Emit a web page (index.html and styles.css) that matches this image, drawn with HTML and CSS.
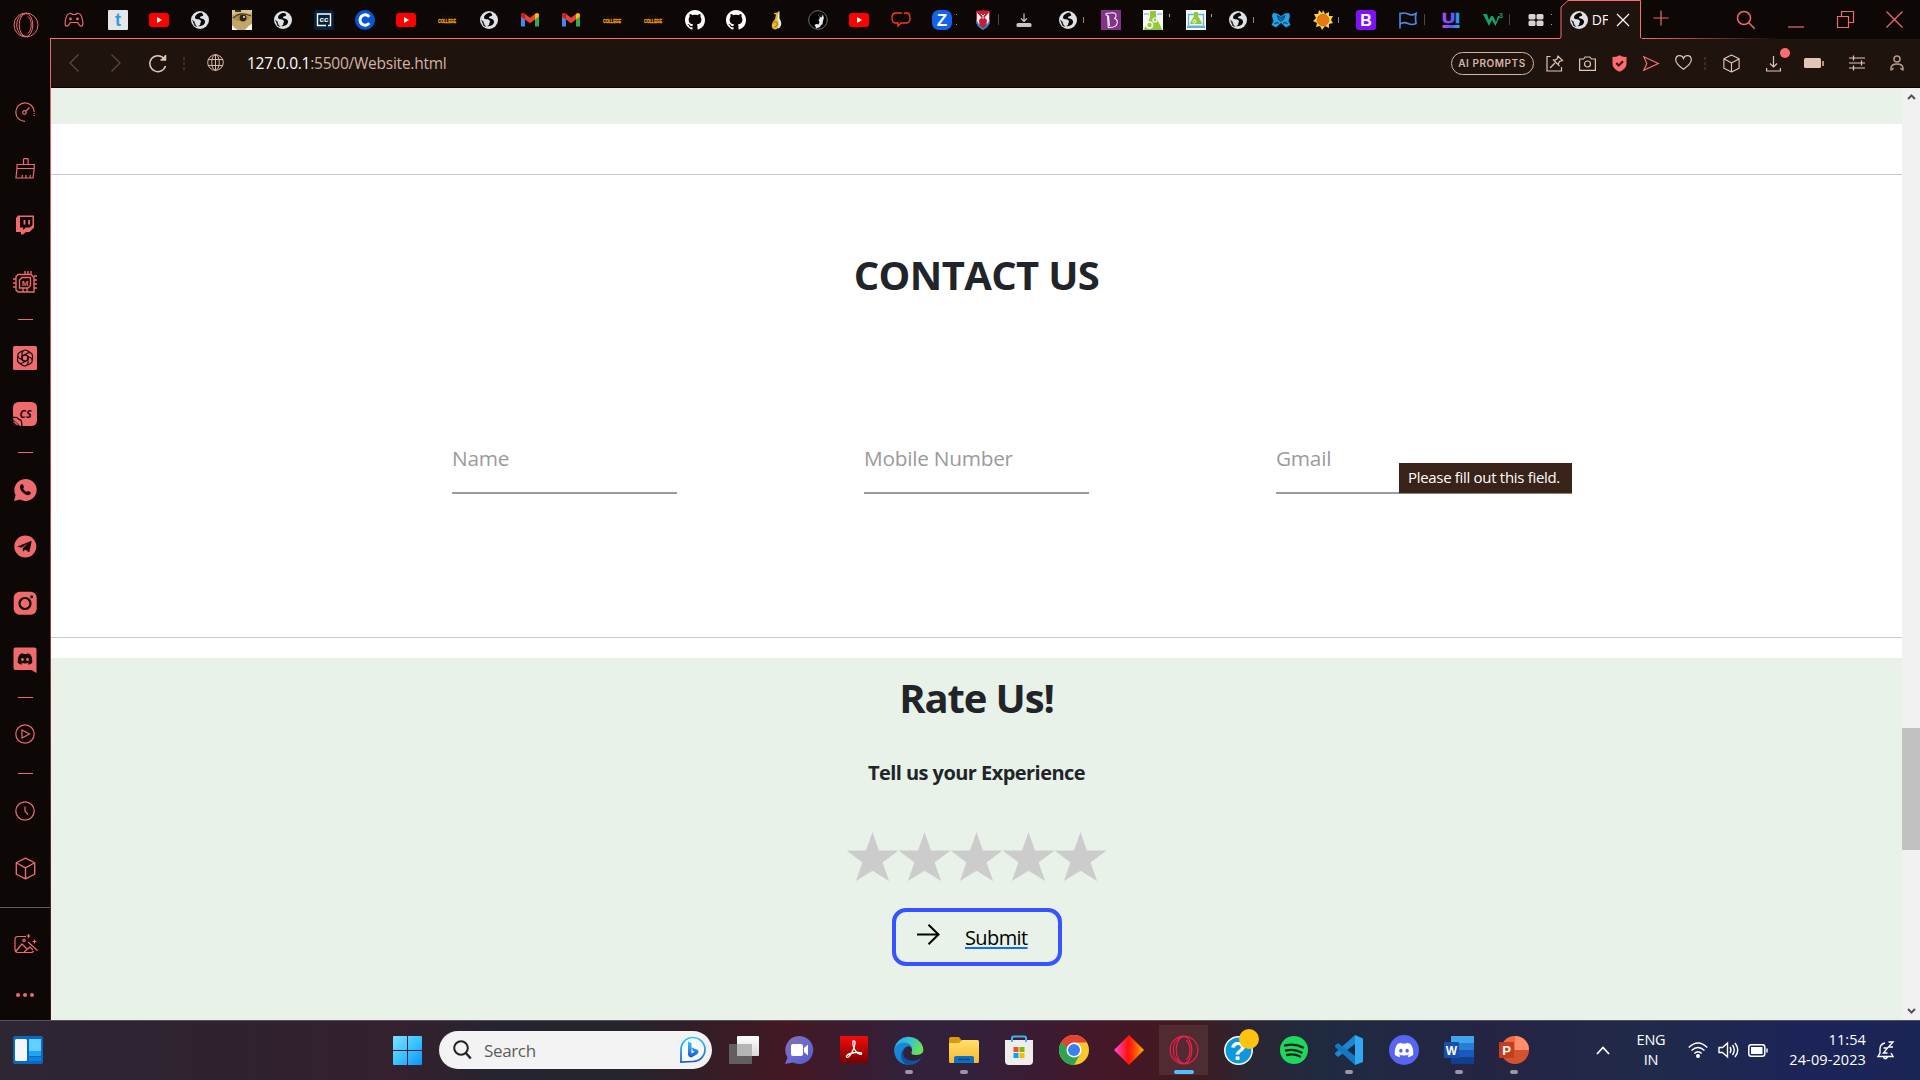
FILE: index.html
```html
<!DOCTYPE html>
<html lang="en">
<head>
<meta charset="utf-8">
<title>DRAFT</title>
<link rel="stylesheet" href="styles.css">
</head>
<body>
<svg class="defs" width="0" height="0">
  <defs>
    <linearGradient id="gUi" x1="0" x2="1"><stop offset="0" stop-color="#b050e8"/><stop offset=".5" stop-color="#6a4cff"/><stop offset="1" stop-color="#10b8f0"/></linearGradient>
    <linearGradient id="gWin" x1="0" y1="0" x2="1" y2="1"><stop offset="0" stop-color="#7fe0ff"/><stop offset=".5" stop-color="#3cc4ff"/><stop offset="1" stop-color="#0a93fa"/></linearGradient>
    <linearGradient id="gBing" x1="0" y1="0" x2="0" y2="1"><stop offset="0" stop-color="#35c8f4"/><stop offset="1" stop-color="#2056d0"/></linearGradient>
    <linearGradient id="gChat" x1="0" y1="0" x2="1" y2="1"><stop offset="0" stop-color="#8c6aa8"/><stop offset=".5" stop-color="#6a6cd0"/><stop offset="1" stop-color="#5058c8"/></linearGradient>
    <linearGradient id="gPdf" x1="0" y1="0" x2="0" y2="1"><stop offset="0" stop-color="#f50c0c"/><stop offset="1" stop-color="#7a0000"/></linearGradient>
    <linearGradient id="gEdge" x1="0" y1="0" x2="1" y2=".4"><stop offset="0" stop-color="#28a8e0"/><stop offset=".5" stop-color="#35c0d8"/><stop offset="1" stop-color="#66e258"/></linearGradient>
    <linearGradient id="gEdge2" x1="0" y1="0" x2="1" y2="1"><stop offset="0" stop-color="#1a90dc"/><stop offset="1" stop-color="#1676c8"/></linearGradient>
    <linearGradient id="gFolder" x1="0" y1="0" x2="0" y2="1"><stop offset="0" stop-color="#ffdf6a"/><stop offset="1" stop-color="#f8b830"/></linearGradient>
    <linearGradient id="gDia" x1="0" x2="1"><stop offset="0" stop-color="#ff4fd8"/><stop offset=".45" stop-color="#ff1212"/><stop offset=".6" stop-color="#ff2c08"/><stop offset="1" stop-color="#ffb300"/></linearGradient>
    <linearGradient id="gTask" x1="0" y1="0" x2="0" y2="1"><stop offset="0" stop-color="#fff"/><stop offset="1" stop-color="#d8d8d8"/></linearGradient>
    <symbol id="world" viewBox="0 0 20 20"><circle cx="10" cy="10" r="9" fill="#dfe3e8"/><path d="M11.500 2.500c-3 .3-5.800 2-6.500 4.500-.3 1.500 1 2.300 2.500 2.200 1.500 0 3 .5 3.400 1.800.3 1-.6 1.600-.6 2.800 0 1.300-.8 2-2.300 2.100 3.500 1 5.600-.8 6.600-2.300 1-1.600.4-3.400-1-4.300-1.300-.8-3.300-.5-3.600-1.500-.3-1 1.200-1.500 2.800-2 1-.5.5-1.500-1.300-3.300z" fill="#0c0807"/><path d="M2 9.500l2.500 2 1 3 2 2.500-3-1z" fill="#2a2c30"/></symbol>
    <symbol id="yt" viewBox="0 0 20 20"><rect y="3" width="20" height="14" rx="3" fill="#f00"/><path d="M8 7v6l5-3z" fill="#fff"/></symbol>
    <symbol id="college" viewBox="0 0 20 20"><text x="10" y="13" text-anchor="middle" font-family="Liberation Sans" font-weight="700" font-size="5.500" textLength="18" lengthAdjust="spacingAndGlyphs" fill="#ffad10" stroke="#f5a30c" stroke-width=".3">COLLEGE</text><path d="M5 6.500h10" stroke="#1c1310" stroke-width="2" stroke-dasharray="2 1"/></symbol>
    <symbol id="gmail" viewBox="0 0 20 20"><path d="M1 16.500V5l4 3v8.500z" fill="#4285f4"/><path d="M15 16.500V8l4-3v11.500z" fill="#34a853"/><path d="M1 7V5c0-2 2-2.600 3.500-1.500L10 7.700l5.500-4.200L15 9.500l-5 3.800-5-3.800z" fill="#ea4335"/><path d="M15 9.500V4l.5-.5C17 2.400 19 3 19 5v1.500z" fill="#fbbc04"/><path d="M1 6.500V5c0-2 2-2.600 3.500-1.500L5 4v5.500z" fill="#c5221f"/></symbol>
    <symbol id="github" viewBox="0 0 16 16"><path fill="#fff" d="M8 0C3.580 0 0 3.580 0 8c0 3.540 2.290 6.530 5.470 7.590.4.070.55-.17.55-.38 0-.19-.01-.82-.01-1.490-2.010.37-2.530-.49-2.690-.94-.09-.23-.48-.94-.82-1.130-.28-.15-.68-.52-.01-.53.63-.01 1.080.58 1.230.82.72 1.210 1.870.87 2.330.66.070-.52.28-.87.51-1.070-1.780-.2-3.640-.89-3.640-3.950 0-.87.31-1.590.82-2.150-.08-.2-.36-1.020.08-2.120 0 0 .67-.21 2.200.82.64-.18 1.320-.27 2-.27s1.360.09 2 .27c1.530-1.040 2.200-.82 2.200-.82.44 1.100.16 1.920.08 2.120.51.56.82 1.270.82 2.150 0 3.070-1.870 3.750-3.650 3.950.29.25.54.73.54 1.480 0 1.070-.01 1.930-.01 2.200 0 .21.15.46.55.38A8.010 8.010 0 0 0 16 8c0-4.420-3.580-8-8-8z"/></symbol>
    <symbol id="opera" viewBox="0 0 26 26"><g fill="none" stroke="currentColor"><circle cx="13" cy="13" r="12"/><ellipse cx="13" cy="13" rx="6.800" ry="11.500"/><path d="M15 4.500c2.500 2 3.200 5 3.200 8.500s-1 6.500-3.200 8.500M12 24.700c-5-1.500-8.300-6-8.300-11.700S7 2.800 12 1.300"/></g></symbol>
    <symbol id="cube" viewBox="0 0 20 20"><path d="M10 1l8 4v10l-8 4-8-4V5zM2 5l8 4.500L18 5M10 9.500V19" fill="none" stroke="currentColor" stroke-width="1.200" stroke-linejoin="round"/></symbol>
    <symbol id="discord" viewBox="0 0 24 24"><path fill="currentColor" d="M20.317 4.370a19.790 19.790 0 0 0-4.885-1.515.074.074 0 0 0-.079.037c-.211.375-.445.865-.608 1.250-1.845-.276-3.680-.276-5.487 0-.164-.393-.406-.874-.618-1.250a.077.077 0 0 0-.079-.037 19.736 19.736 0 0 0-4.885 1.515.07.07 0 0 0-.032.028C.533 9.046-.319 13.580.099 18.058a.082.082 0 0 0 .031.056c2.053 1.508 4.041 2.423 5.993 3.029a.078.078 0 0 0 .084-.028c.462-.63.873-1.295 1.226-1.994a.076.076 0 0 0-.042-.106c-.653-.248-1.274-.55-1.872-.892a.077.077 0 0 1-.008-.128c.126-.094.252-.192.372-.291a.074.074 0 0 1 .078-.011c3.928 1.793 8.180 1.793 12.061 0a.074.074 0 0 1 .079.010c.120.099.246.198.373.292a.077.077 0 0 1-.007.128 12.299 12.299 0 0 1-1.873.891.077.077 0 0 0-.041.107c.360.698.772 1.363 1.225 1.993a.076.076 0 0 0 .084.029c1.961-.607 3.950-1.522 6.002-3.029a.077.077 0 0 0 .031-.055c.5-5.177-.838-9.674-3.549-13.660a.061.061 0 0 0-.031-.029zM8.020 15.331c-1.183 0-2.157-1.086-2.157-2.419 0-1.333.956-2.419 2.157-2.419 1.211 0 2.176 1.095 2.157 2.419 0 1.333-.956 2.419-2.157 2.419zm7.975 0c-1.183 0-2.157-1.086-2.157-2.419 0-1.333.955-2.419 2.157-2.419 1.211 0 2.176 1.095 2.157 2.419 0 1.333-.946 2.419-2.157 2.419z"/></symbol>
  </defs>
</svg>

<div class="screen">
  <div class="browser">
    <aside class="sidebar">
      <div class="brand"><svg width="26" height="26" class="i"><use href="#opera"/></svg></div>
      <div class="item"><svg width="20" height="20" viewBox="0 0 20 20" class="line"><path d="M10 19.300A9.200 9.200 0 1 1 19.200 10"/><path d="M19.200 11v3" stroke-dasharray="1 1"/><circle cx="9.500" cy="10.500" r="1.800"/><path d="M11 9l3.500-3.500"/></svg></div>
      <div class="item"><svg width="20" height="21" viewBox="0 0 20 21" class="line"><path d="M2 6.500h17.300V10L18 20H1L2 10zM8.500 6V1.500q0-.8.8-.8h3q.8 0 .8.800V6M2 10.500h17M7 20l.5-3M11 20v-3M15 20l.5-3"/></svg></div>
      <div class="item"><svg width="20" height="20" viewBox="0 0 20 20"><path fill="#ee6a6c" fill-rule="evenodd" d="M3 .5h16v12L14.500 17H11L8 19.500H6V17H1V3zM5 2v10.500h3.200v2.500l2.500-2.500H15l2.500-2.500V2z"/><path d="M9.500 5v4.500M14 5v4.500" stroke="#ee6a6c" stroke-width="1.800"/></svg></div>
      <div class="item low"><svg width="24" height="24" viewBox="0 0 24 24" class="line"><path d="M5 3.500h13l3 3V21H5l-2-2V5.500zM9 6.500h8.500v8L15 17H6.500V9zM12 0v3.500M15 0v3.500M18 0v3.500M10 21v-4M14 21v-4M0 8h3M0 12h3M0 16h3M21 5h3M21 9h3M21 13h3M21 17h3" stroke-width="1.400"/><text x="12" y="15" text-anchor="middle" class="chipletter">M</text></svg></div>
      <div class="dash"></div>
      <div class="item"><svg width="24" height="24" viewBox="0 0 24 24"><rect width="24" height="24" rx="1.500" fill="#ee6a6c"/><g fill="none" stroke="#140a08" stroke-width="1.200"><path id="petal" d="M9 8.500V7.200a3.300 3.300 0 0 1 5-2.700l3 1.800M9 8.500v5.200l3 1.700"/><use href="#petal" transform="rotate(60 12 12)"/><use href="#petal" transform="rotate(120 12 12)"/><use href="#petal" transform="rotate(180 12 12)"/><use href="#petal" transform="rotate(240 12 12)"/><use href="#petal" transform="rotate(300 12 12)"/></g></svg></div>
      <div class="item"><svg width="24" height="24" viewBox="0 0 24 24"><rect width="24" height="24" rx="5.500" fill="#ee6a6c"/><text x="12.500" y="15.700" text-anchor="middle" class="cs">CS</text><path d="M0 15.500q4-.5 4.500.5 1 1.500 3 2 1.500.8 1.300 6" fill="none" stroke="#140a08" stroke-width="1.300"/><path d="M0 17l7 7q-7 1-7-7z" fill="#140a08"/><path d="M1 18.500q0 4 4.500 4.800z" fill="#ee6a6c"/></svg></div>
      <div class="dash"></div>
      <div class="item"><svg width="24" height="24" viewBox="0 0 24 24"><path d="M12.200 1a11 11 0 1 1-5 20.500L1 23l1.600-5.800A11 11 0 0 1 12.200 1z" fill="#ee6a6c"/><path d="M8.200 6.500c.8-.8 1.500-.4 1.800.3l.9 2c.2.500-.2 1.100-.8 1.800.8 1.600 2 2.700 3.600 3.400.7-.8 1-1.300 1.600-1l2.200 1.100c.7.400.2 2.500-1.600 3-3 1-9-4-9-7.800 0-1.400.7-2.200 1.300-2.800z" fill="#140a08"/></svg></div>
      <div class="item"><svg width="24" height="24" viewBox="0 0 24 24"><circle cx="12.300" cy="12.500" r="11" fill="#ee6a6c"/><path d="M4.500 12.500L18 7q.8-.2.600.7L16.500 17.500q-.2.800-1 .4l-3.300-2.400-1.700 1.700q-.6.300-.7-.5l.1-2.700L15 9.500l-6.700 4.300-3.600-1q-.6-.1-.2-.3z" fill="#140a08"/></svg></div>
      <div class="item"><svg width="24" height="24" viewBox="0 0 24 24"><rect x=".7" y=".7" width="23" height="23" rx="6" fill="#ee6a6c"/><circle cx="12" cy="12.500" r="5.500" fill="none" stroke="#140a08" stroke-width="2.200"/><circle cx="18.700" cy="5.700" r="1.500" fill="#140a08"/></svg></div>
      <div class="item"><svg width="24" height="26" viewBox="0 0 24 26" color="#140a08"><path d="M2.500.5h19Q23.500.5 23.500 2.500V26l-5-3h-16Q.5 23 .5 21V2.500q0-2 2-2z" fill="#ee6a6c"/><use href="#discord" x="4.500" y="4.500" width="15" height="15"/></svg></div>
      <div class="dash"></div>
      <div class="item high"><svg width="20" height="20" viewBox="0 0 20 20" class="line"><circle cx="10" cy="10" r="9.200"/><path d="M7 6v8l7.500-4z"/></svg></div>
      <div class="dash"></div>
      <div class="item"><svg width="20" height="20" viewBox="0 0 20 20" class="line"><circle cx="10" cy="10" r="9.200"/><path d="M10 5.500V10l3 3.500"/></svg></div>
      <div class="item low"><svg width="23" height="23" class="i"><use href="#cube"/></svg></div>
      <div class="sidefoot">
        <svg width="24" height="20" viewBox="0 0 24 20" class="line"><path d="M12 2.500H4Q1 2.500 1 5.500v10Q1 18.500 4 18.500h13Q19 18.500 19.500 17M2 17l6-7 5 5M10 18l6-5 3 3M14 8l9.500 8.500M14.500 0v4M12.500 2h4M20.500 5.500v4M18.500 7.500h4"/><circle cx="10" cy="6.500" r="1.200"/></svg>
        <div class="dots"><i></i><i></i><i></i></div>
      </div>
    </aside>

    <div class="main">
      <header class="tabs">
        <div class="gx"><svg width="20" height="16" viewBox="0 0 20 16" class="line"><path d="M5.500 1.500q1.500-.7 3 1h3q1.500-1.700 3-1Q17.500 2 18.500 8q1 5-.5 6-2 1-4.500-3.500h-7Q4 15 2 14 .5 13 1.500 8 2.500 2 5.500 1.500z"/><circle cx="6.500" cy="7" r=".8"/><circle cx="13.500" cy="7" r=".8"/></svg></div>
        <div class="group g1">
          <div><svg viewBox="0 0 20 20"><rect width="20" height="20" rx="1" fill="#e4e6e8"/><text x="10" y="15.500" text-anchor="middle" font-size="18" fill="#309ce0" class="b">t</text></svg></div>
          <div><svg><use href="#yt"/></svg></div>
          <div><svg><use href="#world"/></svg></div>
          <div><svg viewBox="0 0 20 20"><rect width="20" height="20" fill="#c0a868"/><path d="M0 0h20v3L14 5Q8 0 0 5z" fill="#d8c690"/><path d="M3 0h6v2H3z" fill="#403014"/><path d="M13 20q4-5 7-6v6zM0 15q2 3 6 5H0z" fill="#fbf8f0"/><path d="M1 9q8-8 17-1-7 6-17 1z" fill="#a88c50"/><circle cx="11" cy="8" r="3.400" fill="#2e2414"/><circle cx="12" cy="7" r=".9" fill="#fff"/><path d="M1 8q8-7 18-2" stroke="#4c3a1c" fill="none" stroke-width="1.200"/></svg></div>
          <div><svg><use href="#world"/></svg></div>
          <div><svg viewBox="0 0 20 20"><rect width="20" height="20" rx="2.500" fill="#06213d"/><path d="M12 15.500H3.500V4h13v11.500h-2.500" fill="none" stroke="#fff" stroke-width="1.400"/><text x="10" y="12" text-anchor="middle" font-size="8" fill="#fff" class="b">cc</text></svg></div>
          <div><svg viewBox="0 0 20 20"><circle cx="10" cy="10" r="10" fill="#0756d9"/><path d="M14.300 6.800a5.200 5.200 0 1 0 0 6.400" fill="none" stroke="#fff" stroke-width="3"/></svg></div>
          <div><svg><use href="#yt"/></svg></div>
          <div><svg><use href="#college"/></svg></div>
          <div><svg><use href="#world"/></svg></div>
          <div><svg><use href="#gmail"/></svg></div>
          <div><svg><use href="#gmail"/></svg></div>
          <div><svg><use href="#college"/></svg></div>
          <div><svg><use href="#college"/></svg></div>
          <div><svg><use href="#github"/></svg></div>
          <div><svg><use href="#github"/></svg></div>
          <div><svg viewBox="0 0 20 20"><path d="M7 3l5-.7-1 7q2 3 1 7-2 4-5 3-3-1.500-2-5 .8-3 3-5l1-5H7z" fill="#f0b828"/><path d="M11.500 1l1 .5v7q2.500 4 1.500 7-1.500 3.500-3.500 3 2.500-4 0-9z" fill="#e8e8e8"/><path d="M6.500 13q3-3 4 1-1 3-3 3" stroke="#3a7020" stroke-width=".8" fill="none"/></svg></div>
          <div><svg viewBox="0 0 20 20"><circle cx="10" cy="10" r="9.300" fill="#000" stroke="#70706e"/><path d="M10 4.500q3-2 5 0 1.500 3 0 6.500l-.5 3q-2 1-2.500 3L8 18.500q0-2-1.500-3.500 2-1.500 4-.5l1-2.500-1-2 1.500-2z" fill="#e8ecec"/><path d="M9 3.500q4-2 6 1l-1.500 3-2.500-1z" fill="#14181a"/></svg></div>
          <div><svg><use href="#yt"/></svg></div>
          <div><svg viewBox="0 0 20 20"><path d="M11 3H4.500Q1 3 1 8t3.500 5H7v3l3-3h5.500Q19 13 19 8t-3.500-5H13" fill="none" stroke="#fa3c10" stroke-width="1.400"/></svg></div>
          <div class="mark dot"><svg viewBox="0 0 20 20"><rect width="20" height="20" rx="7" fill="#1264f0"/><text x="10" y="16" text-anchor="middle" font-size="17" fill="#fff" class="b">Z</text></svg></div>
          <div class="mark"><svg viewBox="0 0 20 20"><path d="M3 1q7-1.500 14 0v9q0 6-7 10-7-4-7-10z" fill="#c51f36"/><path d="M4 2.500l4.500 5L4 12zM16 2.500l-4.500 5L16 12z" fill="#f0f0f4"/><path d="M8 4l2 2 2-2M10 6v3" stroke="#f0f0f4" fill="none"/><path d="M3.500 10q1 3 3 5l-.5-5zM16.500 10q-1 3-3 5l.5-5z" fill="#f0f0f4"/><path d="M3.500 11.500q1 4.500 6.500 7.500 5.500-3 6.500-7.500" fill="none" stroke="#1590d0" stroke-width="1.500"/></svg></div>
          <div><svg viewBox="0 0 20 20"><rect x="2.500" y="13" width="15" height="4" rx="1.500" fill="#c8c8c8"/><path d="M10 3.500V11M7 8.500l3 3 3-3" stroke="#c8c8c8" stroke-width="1.200" fill="none"/></svg></div>
        </div>
        <div class="group g2">
          <div class="mark small"><svg><use href="#world"/></svg></div>
          <div><svg viewBox="0 0 20 20"><rect width="20" height="20" fill="#813389"/><path d="M5 3.500l6.500-.8q4 0 3.500 3.500-.2 1.500-1.500 2.300 3 .8 2.800 3.800-.3 4-4 4.700l-5 .8L6.500 5.500 5 5zM7.500 5.500l1 10.500" fill="none" stroke="#eee" stroke-width="1.100" stroke-linejoin="round"/></svg></div>
          <div class="mark tick"><svg viewBox="0 0 20 20"><rect width="20" height="20" fill="#f6f8f4"/><path d="M1 4h5M14 4h5" stroke="#68a8c8" stroke-width="1.200"/><path d="M7 1h6v6l6 12q0 1-1 1H2q-1 0-1-1L7 8z" fill="#93c83a"/><circle cx="6.500" cy="15" r="3" fill="none" stroke="#fff" stroke-width="1.600"/><circle cx="12" cy="10" r="2" fill="none" stroke="#fff" stroke-width="1.200"/></svg></div>
          <div class="mark tick"><svg viewBox="0 0 20 20"><rect width="20" height="20" fill="#f4faf8"/><path d="M2.500 15V4.500h15V15" fill="none" stroke="#62b0dc" stroke-width="1.300"/><rect x="1" y="15.500" width="18" height="2.500" fill="#62b0dc"/><path d="M8 2h4v4l4 7q0 1-1 1H5q-1 0-1-1l4-7z" fill="#93c83a"/><circle cx="8.500" cy="11.500" r="1.500" fill="none" stroke="#fff"/></svg></div>
          <div class="mark small"><svg><use href="#world"/></svg></div>
          <div><svg viewBox="0 0 20 20"><path d="M2 3l4 .5 4 2.500 4-2.500 4-.5 1 3-1.500 5L19.500 15 15 17.500l-5-4.500-5 4.500L.5 15l2-4L1 6z" fill="#1ca4ec"/><path d="M6 5.500l4 2 4-2-1.500 4L10 11.500 7.500 9.500zM3 14l3-2 2 1.500M17 14l-3-2-2 1.500" stroke="#0b3550" stroke-width=".8" fill="#116aa8"/></svg></div>
          <div class="mark small"><svg viewBox="0 0 20 20"><path d="M10 0l2 4 4-2 0 4 4 0-2 4 2 3-4 1 0 4-4-2-3 4-2-4-4 1 1-4-4-2 3-3-2-4 4 0 1-4 3 3z" fill="#f8d04a"/><circle cx="10" cy="10" r="5.800" fill="#ec7614" stroke="#a85408" stroke-width=".5"/></svg></div>
          <div><svg viewBox="0 0 20 20"><rect width="20" height="20" rx="3" fill="#8012f8"/><text x="10" y="15.800" text-anchor="middle" font-size="16" fill="#fff" class="b">B</text></svg></div>
          <div class="mark"><svg viewBox="0 0 20 20"><path d="M2 18.500V2.500M2 4q4-2 8 0t8-.5q-1 4 0 10-4 2-8 0t-8 .5" fill="none" stroke="#4a8ce4" stroke-width="1.600"/></svg></div>
          <div><svg viewBox="0 0 20 20"><text x="10" y="12.500" text-anchor="middle" font-size="15" textLength="18" lengthAdjust="spacingAndGlyphs" fill="url(#gUi)" stroke="url(#gUi)" stroke-width=".6" class="b">UI</text><rect x="1.500" y="15" width="17" height="3" fill="url(#gUi)"/></svg></div>
          <div class="mark"><svg viewBox="0 0 20 20"><path d="M0 4h4l2 6 2-4h2l3 6 2-6h2l-4.500 10L9 10l-3 6z" fill="#12a368"/><text x="18" y="8" text-anchor="middle" font-size="7" fill="#12a368" class="b">3</text></svg></div>
          <div class="mark dot"><svg viewBox="0 0 20 20"><g fill="#d4d4d4"><rect x="2.500" y="4" width="7" height="5.500" rx="1.500"/><rect x="10.500" y="4" width="7" height="5.500" rx="1.500"/><rect x="2.500" y="10.500" width="7" height="5.500" rx="1.500"/><rect x="10.500" y="10.500" width="7" height="5.500" rx="1.500"/></g></svg></div>
        </div>
        <div class="active">
          <svg class="edge" width="82" height="40" viewBox="0 0 82 40"><path d="M0 38.500l1-1V7L8 .5h73V38l1 1v1H0z" fill="#1f130e"/><path d="M0 38.500l1-1.500V7L8 .5h72.500V38" fill="none" stroke="#ff6b6f"/></svg>
          <svg width="20" height="20"><use href="#world"/></svg><span class="tabname">DF</span>
          <svg width="14" height="14" viewBox="0 0 14 14"><path d="M1 1l12 12M13 1L1 13" stroke="#fff" stroke-width="1.200"/></svg>
        </div>
        <div class="plus"><svg width="16" height="16" viewBox="0 0 16 16" class="line"><path d="M.5 8h15M8 .5v15"/></svg></div>
        <div class="winbtns">
          <svg width="20" height="20" viewBox="0 0 20 20" class="line"><circle cx="8" cy="8" r="6.500" stroke-width="1.500"/><path d="M12.700 12.700l6 6" stroke-width="1.500"/></svg>
          <svg width="16" height="18" viewBox="0 0 16 18" class="line"><path d="M0 16h16"/></svg>
          <svg width="17" height="17" viewBox="0 0 17 17" class="line"><path d="M.5 5.500h11v11H.5zM4.500 5V.5h12v11H12"/></svg>
          <svg width="17" height="17" viewBox="0 0 17 17" class="line"><path d="M.5.5l16 16M16.500.5l-16 16"/></svg>
        </div>
      </header>

      <nav class="toolbar">
        <svg class="nav1" width="10" height="18" viewBox="0 0 10 18"><path d="M9.500.5L1 9l8.500 8.500"/></svg>
        <svg class="nav2" width="10" height="18" viewBox="0 0 10 18"><path d="M.5.5L9 9 .5 17.500"/></svg>
        <svg class="reload" width="18" height="18" viewBox="0 0 18 18"><path d="M16.500 12A8 8 0 1 1 15 4.500M16.500 1v5h-5" fill="none" stroke="#e2c5b4" stroke-width="1.500"/><path d="M16.500 1v5h-5z" fill="#e2c5b4"/></svg>
        <i class="sep"></i>
        <svg class="globe" width="17" height="17" viewBox="0 0 17 17"><g fill="none" stroke="#d6b8a8"><circle cx="8.500" cy="8.500" r="7.800"/><ellipse cx="8.500" cy="8.500" rx="3.800" ry="7.800"/><path d="M8.500.5v16M1 5.500h15M1 11.500h15"/></g></svg>
        <div class="url"><b>127.0.0.1</b>:5500/Website.html</div>
        <div class="tools">
          <span class="ai">AI PROMPTS</span>
          <svg width="17" height="17" viewBox="0 0 17 17"><path d="M4.500 1.500H1V16h14.500v-4M4 13l5-5M7 4.500l6.500 6.500M8 5.500l3-1.500 1-3 4.500 4.500-3 1-1.500 3"/></svg>
          <svg width="17" height="15" viewBox="0 0 17 15"><path d="M.6 3h4l1.500-2h4.800l1.500 2h4v11.400H.6z"/><circle cx="8.500" cy="8" r="3"/></svg>
          <svg width="15" height="17" viewBox="0 0 15 17"><path d="M7.500.3q3 2 7 1.500V9q0 5-7 7.700Q.5 14 .5 9V1.800Q4.500 2.300 7.500.3z" fill="#ff6b6f" stroke="none"/><path d="M4.300 8l2.400 2.500 4.300-4.300" stroke="#2a1410" stroke-width="2"/></svg>
          <svg width="16" height="15" viewBox="0 0 16 15" class="red"><path d="M.8.800L15.300 7.500.8 14.300l3-6.800z"/></svg>
          <svg width="17" height="15" viewBox="0 0 17 15" class="heart"><path d="M8.500 14.200Q1 9 .7 5 .7.700 4.500.700 7.500.700 8.500 3.500 9.500.7 12.500.7q3.800 0 3.800 4.300Q16 9 8.500 14.200z"/></svg>
          <i class="sep"></i>
          <svg width="19" height="19"><use href="#cube"/></svg>
          <div class="dl"><svg width="15" height="17" viewBox="0 0 15 17"><path d="M7.500 1v11M4 8.500l3.500 3.500L11 8.500M.6 13v3h13.800v-3"/></svg></div>
          <svg class="batt" width="20" height="10" viewBox="0 0 20 10"><rect width="17" height="10" rx="1.500" fill="#e2c5b4" stroke="none"/><path d="M19 3v5" stroke-width="1.500"/></svg>
          <svg width="16" height="16" viewBox="0 0 16 16"><path d="M0 3h16M0 8h16M0 13h16M4.500.5v5M12.500 5.500v5M4.500 10.500v5"/></svg>
          <svg width="14" height="16" viewBox="0 0 14 16"><g stroke="#b89a8a" stroke-width="1.500"><circle cx="7" cy="4" r="3"/><path d="M1 15.500v-2Q1 9 7 9t6 4.500v2M3.500 13l-2 2M10.500 13l2 2"/></g></svg>
        </div>
      </nav>

      <div class="view">
        <main class="page">
          <div class="band"></div>
          <section class="contact">
            <h1>CONTACT US</h1>
            <div class="fields">
              <div class="field"><span>Name</span></div>
              <div class="field"><span>Mobile Number</span></div>
              <div class="field"><span>Gmail</span><div class="tip">Please fill out this field.</div></div>
            </div>
          </section>
          <section class="rate">
            <h1>Rate Us!</h1>
            <h2>Tell us your Experience</h2>
            <div class="stars"><i></i><i></i><i></i><i></i><i></i></div>
            <a class="submit"><svg width="23" height="21" viewBox="0 0 23 21"><path d="M0 10.500h21.500M11.500.7l10 9.800-10 9.800" fill="none" stroke="#000" stroke-width="2"/></svg><span>Submit</span></a>
          </section>
        </main>
        <div class="scroll">
          <svg width="9" height="6" viewBox="0 0 9 6"><path d="M1 5l3.500-3.500L8 5"/></svg>
          <div class="thumb"></div>
          <svg width="9" height="6" viewBox="0 0 9 6"><path d="M1 1l3.500 3.500L8 1"/></svg>
        </div>
      </div>
    </div>
  </div>

  <footer class="taskbar">
    <svg class="widgets" width="30" height="28" viewBox="0 0 30 28"><rect width="30" height="28" rx="2" fill="#0b68c0"/><rect x="2" y="3" width="12" height="22" rx="1.500" fill="#f4f6f8"/><rect x="16" y="3" width="12" height="12" fill="#62d0ff"/><rect x="16" y="15" width="12" height="5" fill="#22a2f4"/><rect x="16" y="21" width="12" height="4" fill="#0a84e4"/></svg>
    <svg class="start" width="29" height="29" viewBox="0 0 29 29"><path fill="url(#gWin)" d="M1 0h13v14H0V1q0-1 1-1zM15 0h13q1 0 1 1v13H15zM0 15h14v14H1q-1 0-1-1zM15 15h14v13q0 1-1 1H15z"/></svg>
    <div class="search"><svg width="19" height="20" viewBox="0 0 19 20"><circle cx="8" cy="8" r="6.800" fill="none" stroke="#222" stroke-width="2"/><path d="M12.800 13l5 5.500" stroke="#222" stroke-width="2.400"/></svg><span>Search</span><svg width="26" height="26" viewBox="0 0 26 26"><path d="M1 25V13A12 12 0 1 1 13 24.500z" fill="#f4faff" stroke="url(#gBing)" stroke-width="1.700"/><path d="M8 4.500l3.500 1.500v10.500l3-1.700-1.800-1-1.200-3.300 6 2.300q2 1.700 0 4.200l-6 3.500Q9 20.500 8 18z" fill="url(#gBing)"/></svg></div>
    <div class="apps">
      <div><svg viewBox="0 0 30 30"><rect x="8" y="1" width="22" height="20" rx="1" fill="url(#gTask)"/><rect y="9" width="23" height="20" rx="1" fill="#6a6a6a" opacity=".85"/><rect x="8" y="9" width="15" height="12" fill="#b4b4b4"/></svg></div>
      <div><svg viewBox="0 0 30 30"><path d="M15.500 1a14 14 0 1 1-6.500 26.500L1 29l2.500-6.500A14 14 0 0 1 15.500 1z" fill="url(#gChat)"/><rect x="7" y="9" width="12" height="12" rx="2" fill="#fff"/><path d="M20 13l4-3.500v11L20 17z" fill="#fff"/></svg></div>
      <div><svg viewBox="0 0 30 30"><rect x="1" y="1" width="28" height="27" fill="url(#gPdf)"/><path d="M14 6q3-1 1.500 5-2 7-6 11-2.500 1-2-1 2-3 9-3.500 7-.5 6 1.500-2 1.500-5.500-2.500Q13 11 14 6z" fill="none" stroke="#fff" stroke-width="1.300"/></svg></div>
      <div class="run"><svg viewBox="0 0 30 30"><path d="M0 14A15 15 0 0 1 29 12q2 8-7 8-5 0-4.500-2.500 1.500-2 0-5Q12 5 0 14z" fill="url(#gEdge)"/><path d="M0 15Q2 8 9 7.500q8-.5 9 6-2-3-5-2-5 2-4.500 8Q9 26 15 30 1 29 0 15z" fill="url(#gEdge2)"/><path d="M11.500 13q-6 8 3 12 7 2.500 13.500-3-5 9-14.500 8-7-3-6.500-10 .5-5 4.500-7z" fill="#0c549c"/></svg></div>
      <div class="run"><svg viewBox="0 0 30 30"><path d="M0 4q0-2 2-2h8l3 4h15v5H0z" fill="#d89a08"/><path d="M0 8h10l3-3h15.500Q30 5 30 6.500v20q0 1.500-1.500 1.500h-27Q0 28 0 26.500z" fill="url(#gFolder)"/><path d="M5 28v-5q0-2 2-2h16q2 0 2 2v5z" fill="#0c70c4"/><path d="M9 24.500h12" stroke="#064a88" stroke-width="1.500"/></svg></div>
      <div><svg viewBox="0 0 30 30"><path d="M8 6V3q0-1.500 1.500-1.500h11Q22 1.500 22 3v3" fill="none" stroke="#3cb4f0" stroke-width="2"/><path d="M1 5h28v21q0 4-4 4H5q-4 0-4-4z" fill="#ededed"/><path d="M8 2.500V7M22 2.500V7" stroke="#3cb4f0" stroke-width="2"/><path fill="#f25022" d="M9.500 12h5v5h-5z"/><path fill="#7fba00" d="M15.500 12h5v5h-5z"/><path fill="#00a4ef" d="M9.500 18h5v5h-5z"/><path fill="#ffb900" d="M15.500 18h5v5h-5z"/></svg></div>
      <div><svg viewBox="0 0 30 30"><circle cx="15" cy="15" r="15" fill="#fbc72c"/><path d="M2 7.500A15 15 0 0 0 15 30l6.500-11.500L15 15z" fill="#30a350"/><path d="M2 7.500A15 15 0 0 1 28 7.500H15L8 12z" fill="#e34335"/><circle cx="15" cy="15" r="7.500" fill="#fff"/><circle cx="15" cy="15" r="6" fill="#3a7ef0"/></svg></div>
      <div><svg viewBox="0 0 30 30"><path d="M15 0l15 15-15 15L0 15z" fill="url(#gDia)"/></svg></div>
      <div class="run on"><svg viewBox="0 0 30 30" color="#f31f4e"><use href="#opera"/></svg></div>
      <div><svg viewBox="0 0 30 30"><circle cx="14.500" cy="15.500" r="13.700" fill="#0d98dc" stroke="#fff" stroke-width="1.500"/><text x="14" y="25" text-anchor="middle" font-size="26" fill="#fff" class="b">?</text></svg><em></em></div>
      <div><svg viewBox="0 0 30 30"><circle cx="15" cy="15" r="14" fill="#1ed760"/><path d="M6 10.500q10-2.500 18 2M7 15.500q8.500-2 15.500 2M8 20q7-1.700 13 1.500" fill="none" stroke="#102818" stroke-width="2.400" stroke-linecap="round"/></svg></div>
      <div class="run"><svg viewBox="0 0 30 30"><path d="M21 0l8 3.500V27l-8 3z" fill="#30a8f4"/><path d="M21 0v9L4 22l-3-2.500v-1.500z" fill="#1a86d4"/><path d="M21 30v-9L4 8 1 10.500V12z" fill="#1478c0"/></svg></div>
      <div><svg viewBox="0 0 30 30" color="#fff"><circle cx="15" cy="15" r="15" fill="#5765f2"/><use href="#discord" x="5.500" y="5.500" width="19" height="19"/></svg></div>
      <div class="run"><svg viewBox="0 0 30 30"><path d="M7 1h23v7H7z" fill="#41a5ee"/><path d="M7 8h23v7H7z" fill="#2b7cd3"/><path d="M7 15h23v7H7z" fill="#185abd"/><path d="M7 22h23v7H7z" fill="#103f91"/><rect y="7" width="15" height="16" rx="1" fill="#1650ac"/><text x="7.500" y="19.500" text-anchor="middle" font-size="12" fill="#fff" class="b">W</text></svg></div>
      <div class="run"><svg viewBox="0 0 30 30"><circle cx="16" cy="15" r="14" fill="#d35230"/><path d="M16 1a14 14 0 0 1 14 14H16z" fill="#ff8f6b"/><path d="M16 1v14H2A14 14 0 0 1 16 1z" fill="#ed6c47"/><rect y="7" width="15" height="16" rx="1" fill="#c43e1c"/><text x="7.500" y="19.500" text-anchor="middle" font-size="13" fill="#fff" class="b">P</text></svg></div>
    </div>
    <div class="tray">
      <svg class="chev" width="14" height="9" viewBox="0 0 14 9"><path d="M1 8l6-6.500L13 8" stroke-width="1.800"/></svg>
      <div class="lang">ENG<br>IN</div>
      <svg class="wifi" width="20" height="16" viewBox="0 0 20 16"><path d="M.7 5.500q9.300-9 18.600 0M3.500 8.500q6.500-6 13 0M6.300 11.500q3.700-3.500 7.400 0"/><circle cx="10" cy="14" r="1.300" fill="#fff"/></svg>
      <svg class="vol" width="21" height="18" viewBox="0 0 21 18"><path d="M1 6.500h3.500L9.500 2v14l-5-4.500H1zM12 6q2 3 0 6M14.500 4q3.500 5 0 10M17 2q5.500 7 0 14"/></svg>
      <svg class="bat" width="20" height="13" viewBox="0 0 20 13"><rect x=".8" y=".8" width="16" height="11.400" rx="2.500" stroke-width="1.500"/><rect x="3" y="3" width="11.500" height="7" fill="#fff" stroke="none"/><path d="M19 4.500v4"/></svg>
      <div class="clock">11:54<br>24-09-2023</div>
      <svg class="bell" width="18" height="19" viewBox="0 0 18 19"><path d="M8 2Q3 3 3 8v4l-2 3.500h15L14 12M6.500 16q1.500 3.500 4 0M11.500 1H16l-4.500 5H16M6.500 7h4l-4 5h4"/></svg>
    </div>
  </footer>
</div>
</body>
</html>
```
FILE: styles.css
```css
* { box-sizing: border-box; }
body { margin: 0; background: #0d0806; font-family: "Open Sans", "Noto Sans", sans-serif; }
svg { display: block; flex: none; overflow: visible; }
.defs { position: absolute; }
.b { font-family: "Liberation Sans", sans-serif; font-weight: 700; }
.screen { width: 1920px; height: 1080px; display: flex; flex-direction: column; overflow: hidden; }
.browser { height: 1020px; display: flex; }
.line { fill: none; stroke: #ee6a6c; stroke-width: 1.2; }
.line text { stroke: none; fill: #ee6a6c; }
.chipletter { font: 700 8px "Liberation Sans", sans-serif; }
.cs { font: italic 700 10.5px "Open Sans", sans-serif; fill: #140a08; }
.i { color: #ee6a6c; }

/* left rail */
.sidebar { width: 51px; display: flex; flex-direction: column; background: linear-gradient(#e96b6b, #a84748 50%, #3a1716) no-repeat right 38px / 1px 982px, #0d0806; }
.brand { height: 84px; padding: 12px 0 0 12.500px; }
.item { height: 56.6px; display: grid; place-items: center; width: 50px; }
.item.low { padding-top: 2px; }
.item.high { padding-bottom: 2px; }
.dash { height: 19px; width: 50px; display: grid; place-items: center; }
.dash::after { content: ""; width: 15px; height: 1px; background: #ee6a6c; }
.sidefoot { margin-top: auto; height: 113px; width: 50px; border-top: 1px solid #5f5b5a; display: flex; flex-direction: column; align-items: center; padding: 26px 0 0 2px; gap: 39px; }
.dots { display: flex; gap: 3px; margin-left: -2px; }
.dots i { width: 4px; height: 4px; border-radius: 50%; background: #ee6a6c; }

/* tab strip */
.main { flex: 1; display: flex; flex-direction: column; }
.tabs { height: 39px; display: flex; background: linear-gradient(90deg, #ff6b6f 1590px, #0d0806 1730px) no-repeat left bottom / 100% 1px, #0d0806; }
.gx { width: 46.4px; display: grid; place-items: center; }
.group { display: grid; grid-auto-flow: column; }
.group > div { display: grid; place-items: center; position: relative; }
.group svg { width: 20px; height: 20px; }
.g1 { grid-auto-columns: 41.2px; }
.g2 { grid-auto-columns: 42.5px; margin-left: 2.5px; }
.mark::after { content: ""; position: absolute; right: 5px; top: 14px; width: 1px; height: 11px; background: #4c4845; }
.mark.small::after { height: 6px; top: 17px; right: 6px; background: #8a8886; }
.mark.tick::after { height: 3px; top: 14px; background: #aaa; }
.mark.dot::after { height: 1px; top: 14px; background: #999; box-shadow: 0 10px #999; }
.active { position: relative; width: 81px; margin-left: 2.5px; height: 39px; display: flex; align-items: center; padding-left: 9px; gap: 3px; }
.active > * { position: relative; }
.active .edge { position: absolute; left: 0; top: 0; }
.tabname { width: 16px; font-size: 14px; color: #fff; overflow: hidden; margin-right: 5px; }
.plus { width: 38px; padding: 10px 0 0 12.5px; }
.winbtns { margin-left: auto; display: flex; gap: 32.5px; align-items: center; padding-right: 17px; }

/* address bar */
.toolbar { height: 49px; background: #1f130e; border-bottom: 1px solid #0d0806; display: flex; align-items: center; }
.toolbar .nav1 { margin-left: 18px; }
.toolbar .nav2 { margin-left: 32px; }
.nav1, .nav2 { fill: none; stroke: #5d4a41; stroke-width: 1.2; }
.reload { margin-left: 28px; }
.sep { width: 2px; height: 13px; background: repeating-linear-gradient(#46291e 0 3px, transparent 3px 5px); }
.reload + .sep { margin-left: 16px; }
.globe { margin: -1px 0 0 22px; }
.url { margin-left: 23px; font-size: 15.5px; letter-spacing: -.24px; color: #d3b3a3; white-space: nowrap; }
.url b { font-weight: 400; color: #fff; }
.tools { margin-left: auto; display: flex; align-items: center; padding-right: 16px; }
.tools svg { fill: none; stroke: #e2c5b4; stroke-width: 1.2; color: #e2c5b4; }
.tools .red { stroke: #ff6b6f; }
.tools .heart { margin-top: -2px; }
.ai { width: 83px; height: 23px; border: 1px solid #d4b5a5; border-radius: 12px; color: #d4b5a5; font: 600 10px/21px Inter, sans-serif; letter-spacing: .55px; text-align: center; margin-right: 12px; }
.tools > svg + svg { margin-left: 16px; }
.tools .sep { margin: 0 16px 0 12px; }
.dl { position: relative; margin: 0 23px 0 25px; }
.dl::after { content: ""; position: absolute; width: 10px; height: 10px; border-radius: 50%; background: #ff6b6f; right: -9px; top: -7px; }
.tools > .batt + svg { margin-left: 25px; }
.tools > .batt + svg + svg { margin-left: 25.5px; }

/* page */
.view { height: 932px; display: flex; }
.page { flex: 1; background: #fff; color: #212529; text-align: center; }
.band { height: 36px; background: #e8f2e8; }
.contact { margin-top: 50px; height: 464px; border: solid #c8c8c8; border-width: 1px 0; padding-top: 70px; }
h1 { margin: 0; font-size: 40px; line-height: 60px; font-weight: 700; letter-spacing: -.65px; }
.fields { display: flex; gap: 187px; margin: 129px 0 0 401px; }
.field { position: relative; width: 225px; height: 60px; border-bottom: 2px solid #9b9b9b; text-align: left; color: #9b9b9b; font-size: 20.8px; line-height: 48px; letter-spacing: -.25px; }
.tip { position: absolute; left: 123px; top: 29px; width: 173px; height: 31px; background: #392318; border-bottom: 1px solid #927f74; color: #fff; font-size: 15px; line-height: 29px; padding-left: 9px; letter-spacing: -.31px; white-space: nowrap; }
.rate { margin-top: 20px; height: 362px; background: #e8f2e8; padding-top: 10px; display: flex; flex-direction: column; align-items: center; }
.rate h1 { letter-spacing: -1.1px; }
h2 { margin: 30px 0 0; font-size: 20px; line-height: 30px; font-weight: 700; letter-spacing: -.55px; }
.stars { display: flex; margin-top: 44px; }
.stars i { width: 52px; height: 49px; background: #ccc; clip-path: polygon(50% 0, 62.5% 38%, 100% 38%, 69.5% 62%, 82% 100%, 50% 79%, 18% 100%, 30.5% 62%, 0 38%, 37.5% 38%); }
.submit { width: 170px; height: 58px; margin-top: 27px; border: 4px solid #3654ff; border-radius: 14px; display: flex; padding: 12px 0 0 21px; gap: 25.5px; color: #000; font-size: 20px; line-height: 28px; letter-spacing: -.6px; }
.submit span { text-decoration: underline 2px #0d6efd; text-underline-offset: 2px; height: 28px; }
.scroll { width: 18px; background: #f1f1f1; display: flex; flex-direction: column; align-items: center; padding: 6px 0; }
.scroll path { fill: none; stroke: #555; stroke-width: 2; }
.thumb { width: 18px; height: 122px; background: #c1c1c1; margin: 628px 0 auto; }

/* taskbar */
.taskbar { height: 60px; border-top: 1px solid #55505a; padding-bottom: 1px; display: flex; align-items: center; background: linear-gradient(90deg, #2d2633 0, #30222f 250px, #35202f 400px, #25252f 500px, #25252e 620px, #351d26 710px, #441824 790px, #33203a 900px, #33203a 980px, #43182a 1090px, #42191f 1190px, #2a2634 1250px, #1f2a42 1330px, #252443 1500px, #202a4a 1650px, #1c2458 1800px, #1b2555); }
.widgets { margin-left: 13px; }
.start { margin-left: 350px; }
.search { width: 273px; height: 38px; margin-left: 17px; border-radius: 19px; background: #f3f3f3; display: flex; align-items: center; padding: 0 6px 0 14px; color: #5c5c5c; font-size: 17px; }
.search span { margin: 0 auto 0 12px; letter-spacing: -.35px; }
.apps { display: flex; margin-left: 4px; height: 58px; }
.apps > div { width: 55px; height: 58px; display: grid; place-items: center; position: relative; }
.apps svg { width: 30px; height: 30px; }
.run::after { content: ""; position: absolute; bottom: 5px; left: 23.5px; width: 8px; height: 4px; border-radius: 2px; background: #9d96a2; }
.run.on { background: linear-gradient(#ffffff14, #ffffff14) no-repeat center / 49px 50px; }
.run.on::after { width: 20px; left: 17.5px; background: #4cc2ff; }
.apps em { position: absolute; width: 20px; height: 20px; border-radius: 50%; background: #ffc20e; left: 28px; top: 8px; }
.tray { flex: 1; height: 58px; display: flex; align-items: center; color: #fff; font-size: 14.5px; line-height: 20px; }
.tray svg { fill: none; stroke: #fff; stroke-width: 1.4; }
.chev { margin-left: 55px; }
.lang { width: 40px; margin-left: 21px; text-align: center; letter-spacing: -.2px; }
.wifi { margin-left: 17px; }
.vol { margin-left: 10px; }
.bat { margin-left: 9px; }
.clock { width: 84px; margin-left: 14px; text-align: right; letter-spacing: .1px; }
.bell { margin-left: 11px; }
```
